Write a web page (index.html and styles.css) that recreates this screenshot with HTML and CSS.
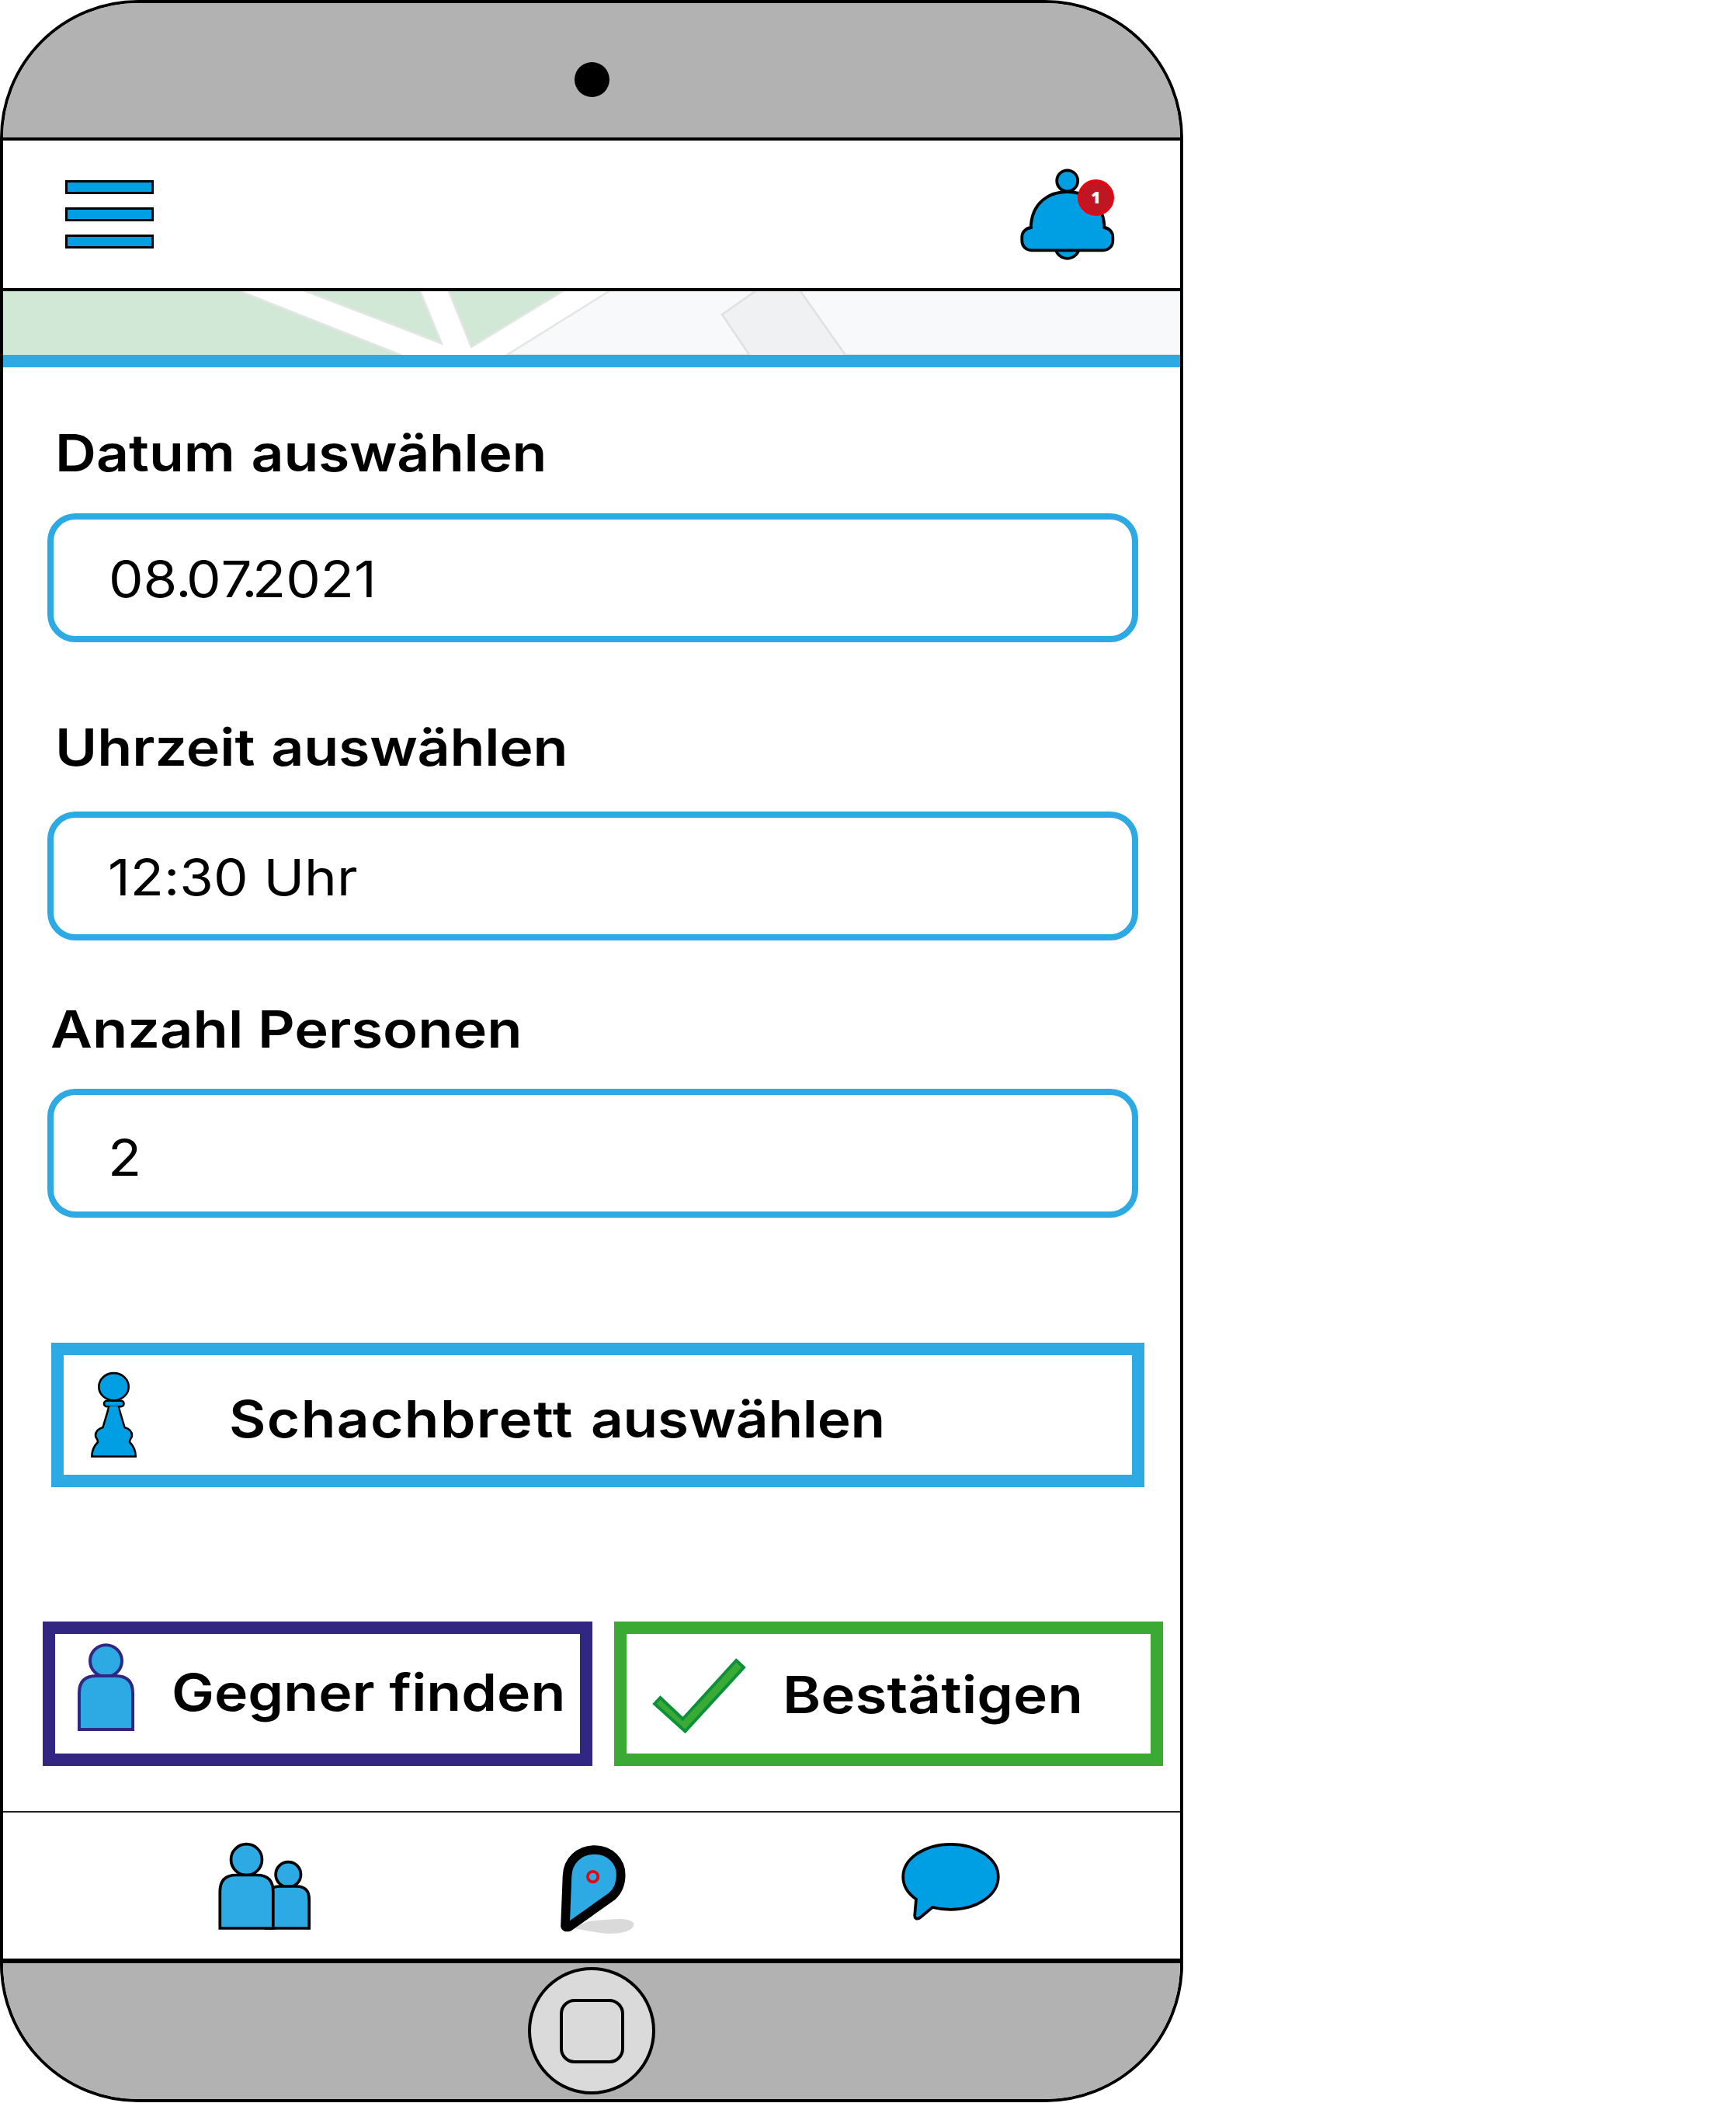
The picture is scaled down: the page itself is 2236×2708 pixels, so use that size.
FILE: index.html
```html
<!DOCTYPE html>
<html lang="de">
<head>
<meta charset="utf-8">
<title>Schach im Park</title>
<link rel="stylesheet" href="styles.css">
</head>
<body>
<div class="phone">
  <div class="bezel-top"><span class="camera"></span></div>
  <header class="header">
    <div class="menu"><i></i><i></i><i></i></div>
    <div class="bell">
      <svg width="122" height="124" viewBox="1314 214 122 124" fill="#009fe3" stroke="#000" stroke-width="3.8">
        <circle cx="1374.7" cy="317.3" r="15.5"/>
        <circle cx="1374.7" cy="232.8" r="13.5"/>
        <path d="M1328 293V289C1330 262 1350 247 1374.7 247S1420 262 1422.3 289V293C1429 294 1433.3 299 1433.3 305V310C1433.3 317 1428 322.3 1421 322.3H1328.5C1321.500 322.3 1316.300 317 1316.300 310V305C1316.300 299 1321 294 1328 293Z"/>
      </svg>
      <span class="badge">1</span>
    </div>
  </header>
  <div class="map">
    <svg width="1516" height="82" viewBox="4 375 1516 82" stroke="#e4e6e4" stroke-width="2.500">
      <rect x="4" y="375" width="1516" height="82" fill="#fff" stroke="none"/>
      <path d="M786 374L653 457H1530V374Z" fill="#f8f9fb"/>
      <path d="M0 365H284L516 457V470H0Z" fill="#d1e8d6"/>
      <path d="M368 365H537L569 442.500Z" fill="#d1e8d6"/>
      <path d="M574 365H741L607 447Z" fill="#d1e8d6"/>
      <path d="M987 365L930 405L974 470H1098L1024 365Z" fill="#f0f1f3" stroke="#e0e0e2"/>
    </svg>
  </div>
  <main class="form">
    <h2 class="label label-date"><span>Datum <em>auswählen</em></span></h2>
    <div class="field"><span class="date">08<i>.</i>0<b>7</b><i>.</i>2021</span></div>
    <h2 class="label label-time"><span>Uhrzeit <em>auswählen</em></span></h2>
    <div class="field"><span>12:30 Uhr</span></div>
    <h2 class="label label-count"><span>Anzahl Personen</span></h2>
    <div class="field field-count"><span>2</span></div>
    <div class="button board">
      <svg width="60" height="112" viewBox="116 1765 60 112" fill="#009fe3" stroke="#000" stroke-width="2.6">
        <path d="M140.500 1811L132.500 1838C126 1840 123 1844 123 1848.500C123 1852 126.500 1853 126 1857C120 1863 118.300 1869 118.300 1875.500H174.700C174.700 1869 173 1863 167 1857C166.500 1853 170 1852 170 1848.500C170 1844 167 1840 160.500 1838L152.500 1811Z"/>
        <rect x="134" y="1803.800" width="25.500" height="7.400" rx="3.500"/>
        <path d="M141.500 1810.500H151.500L153 1815H140Z" stroke="none"/>
        <ellipse cx="146.500" cy="1785.700" rx="19.200" ry="17.600"/>
      </svg>
      <span>Schachbrett <em>auswählen</em></span>
    </div>
    <div class="actions">
      <div class="button find">
        <svg width="74" height="114" viewBox="100 2116 74 114" fill="#2da9e3" stroke="#312782" stroke-width="4">
          <circle cx="136.500" cy="2138.700" r="20.500"/>
          <path d="M102 2227V2180Q102 2158 124 2158H149Q171 2158 171 2180V2227Z"/>
        </svg>
        <span>Gegner finden</span>
      </div>
      <div class="button confirm">
        <svg width="122" height="100" viewBox="840 2134 122 100" fill="#3aaa35" stroke="#0b9139" stroke-width="4">
          <path d="M843 2194L850.500 2186L879.500 2213.500L948.300 2138L958 2147L882.500 2229.500Z"/>
        </svg>
        <span>Bestätigen</span>
      </div>
    </div>
  </main>
  <nav class="nav">
    <svg width="120" height="114" viewBox="281 2372 120 114" fill="#2da9e3" stroke="#000" stroke-width="3.700">
      <circle cx="371.300" cy="2413.800" r="16.200"/>
      <path d="M343 2483V2447Q343 2429 361 2429H382Q398.200 2429 398.200 2446V2483Z"/>
      <circle cx="317.500" cy="2394.600" r="20"/>
      <path d="M283.300 2483V2436Q283.300 2414.500 304 2414.500H331Q351.800 2414.500 351.800 2436V2483Z"/>
    </svg>
    <svg width="96" height="116" viewBox="722 2375 96 116">
      <path d="M738 2482L758 2474Q784 2471 799 2471Q816 2472 816.500 2478Q815 2490 782 2490Q770 2489 738 2483Z" fill="#dadada"/>
      <path d="M728 2480L730.500 2416C731 2396 746 2382 766 2382C786 2382 799.700 2397 799.700 2414C799.700 2428 795 2436 788 2442L733 2481Q729 2482.500 728 2480Z" fill="#2da9e3" stroke="#000" stroke-width="11.600" stroke-linejoin="round"/>
      <circle cx="763.600" cy="2416.600" r="6.700" fill="none" stroke="#e30613" stroke-width="3.700"/>
    </svg>
    <svg width="128" height="102" viewBox="1160 2372 128 102">
      <path d="M1180 2445.500C1169 2438 1163.200 2428 1163.200 2416.800C1163.200 2393.500 1190.500 2374.800 1224.500 2374.800S1285.800 2393.500 1285.800 2416.800S1258.500 2458.800 1224.500 2458.800Q1212 2458.800 1201 2456L1186 2468.500Q1182 2472 1179.500 2470Q1178 2469 1178.200 2466Z" fill="#009fe3" stroke="#000" stroke-width="3.700"/>
    </svg>
  </nav>
  <div class="bezel-bottom"><div class="home"><span></span></div></div>
</div>
</body>
</html>
```
FILE: styles.css
```css
* { box-sizing: border-box; margin: 0; padding: 0; }
body { background: #fff; color: #000; font-family: Inter, "Liberation Sans", sans-serif; }
svg { display: block; flex: none; }

.phone {
  width: 1524px;
  height: 2707px;
  display: flex;
  flex-direction: column;
  border: 4px solid #000;
  border-radius: 178px;
  background: #fff;
  overflow: hidden;
}
.phone > * { flex: none; }

.bezel-top {
  height: 177px;
  background: #b2b2b2;
  border-bottom: 4px solid #000;
  display: flex;
  justify-content: center;
  padding-top: 76px;
}
.camera { width: 45px; height: 45px; border-radius: 50%; background: #000; }

.header {
  height: 194px;
  border-bottom: 4px solid #000;
  display: flex;
  justify-content: space-between;
  padding: 33px 84px 0 80px;
}
.menu { display: flex; flex-direction: column; gap: 17px; padding-top: 18px; }
.menu i { width: 114px; height: 18px; background: #009fe3; border: 3px solid #000; }
.bell { position: relative; }
.badge {
  position: absolute;
  left: 74px;
  top: 17px;
  width: 47px;
  height: 47px;
  border: 4px solid #e30613;
  border-radius: 50%;
  background: #be1622;
  color: #fff;
  font: 800 21px/38px "Open Sans", sans-serif;
  text-align: center;
}

.map { height: 98px; border-bottom: 16px solid #2da9e3; }

.form { height: 1859px; padding: 77px 22px 0 57px; }
.label { font-size: 66px; line-height: 66px; font-weight: 600; white-space: nowrap; }
.label-date { padding-left: 10px; margin-bottom: 45px; }
.label-time { padding-left: 10px; margin: 102.500px 0 50px; }
.label-count { padding-left: 4px; margin: 81.500px 0 44px; }

.label span, .field span, .button span {
  display: inline-block;
  transform: scaleX(1.115);
  transform-origin: 0 50%;
  white-space: nowrap;
  font-variant-ligatures: none;
}
.label-date span { transform: scaleX(1.111); }
.label-count span { transform: scaleX(1.122); }
.label em { font-style: normal; margin-left: 2px; letter-spacing: -0.250px; }
.field {
  width: 1405px;
  height: 165.500px;
  border: 8px solid #2da9e3;
  border-radius: 36px;
  padding: 45px 0 0 70px;
  font-size: 64px;
  line-height: 64px;
}
.field span { transform: scaleX(1.105); }
.field .date { margin-left: 1px; }
.field b { font-weight: 400; letter-spacing: -10px; }
.field i { font-style: normal; margin-left: -2px; letter-spacing: -6px; }
.field-count { padding-top: 49px; }

.button {
  height: 186px;
  border: 16px solid #2da9e3;
  display: flex;
  align-items: flex-start;
  font-size: 66px;
  line-height: 66px;
  font-weight: 600;
}
.board { width: 1408px; margin: 161px 0 0 5px; padding: 20px 0 0 34px; }
.board span { margin: 29px 0 0 119px; letter-spacing: 1.250px; word-spacing: 2px; transform: scaleX(1.105); }
.board em { font-style: normal; letter-spacing: -0.200px; }
.actions { display: flex; gap: 28px; margin: 173px 0 0 -6px; }
.find { width: 708px; border-color: #312782; padding: 12px 0 0 29px; }
.find span { margin: 30px 0 0 47px; transform: scaleX(1.112); }
.confirm { width: 708px; border-color: #3aaa35; padding: 30px 0 0 33px; }
.confirm span { margin: 15px 0 0 46px; transform: scaleX(1.133); }

.nav {
  height: 196px;
  border-top: 2px solid #222;
  border-bottom: 6px solid #000;
  display: flex;
  justify-content: space-between;
  padding: 38px 232px 0 277px;
}
.nav svg:nth-child(2) { margin: 3px 0 0 -22px; }

.bezel-bottom {
  height: 175px;
  background: #b2b2b2;
  display: flex;
  justify-content: center;
  padding-top: 5px;
}
.home {
  width: 164px;
  height: 164px;
  border: 4px solid #000;
  border-radius: 50%;
  background: #dadada;
  display: flex;
  align-items: center;
  justify-content: center;
}
.home span { width: 83px; height: 83px; border: 4px solid #000; border-radius: 19px; }
```
